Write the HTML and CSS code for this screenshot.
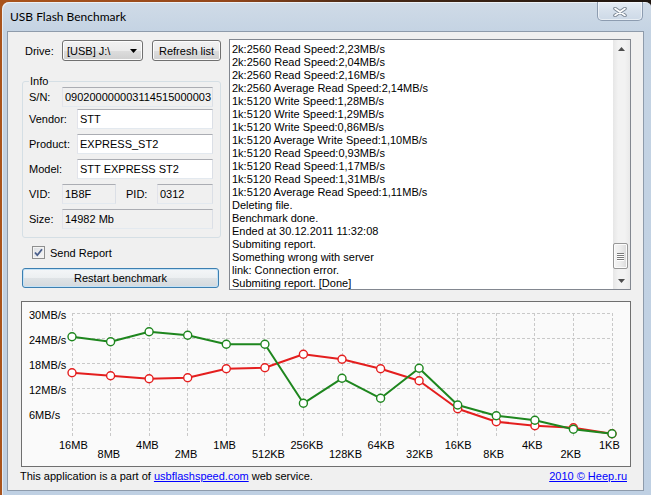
FILE: index.html
```html
<!DOCTYPE html>
<html>
<head>
<meta charset="utf-8">
<title>USB Flash Benchmark</title>
<link rel="stylesheet" href="styles.css">
</head>
<body>
<div class="window">
  <div class="titlebar">
    <span class="title">USB Flash Benchmark</span>
    <div class="close-btn">
      <svg class="close-x" width="14" height="10" viewBox="0 0 14 10">
        <path class="x-outline" d="M2 1.5 L12 8.5 M12 1.5 L2 8.5"/>
        <path class="x-fill" d="M2 1.5 L12 8.5 M12 1.5 L2 8.5"/>
      </svg>
    </div>
  </div>
  <div class="client">
    <div class="top">
      <div class="left">
        <div class="drive-row">
          <span class="drive-label">Drive:</span>
          <div class="combo"><span class="combo-text">[USB] J:\</span><svg class="combo-arrow" width="7" height="4" viewBox="0 0 7 4"><path d="M0 0H7L3.5 4Z"/></svg></div>
          <div class="btn refresh">Refresh list</div>
        </div>
        <fieldset class="info">
          <legend>Info</legend>
          <div class="row first"><span class="lbl short">S/N:</span><div class="field ro">090200000003114515000003</div></div>
          <div class="row tight"><span class="lbl long">Vendor:</span><div class="field">STT</div></div>
          <div class="row"><span class="lbl long">Product:</span><div class="field">EXPRESS_ST2</div></div>
          <div class="row"><span class="lbl long">Model:</span><div class="field">STT EXPRESS ST2</div></div>
          <div class="row"><span class="lbl short">VID:</span><div class="field ro vid">1B8F</div><span class="lbl pid">PID:</span><div class="field ro">0312</div></div>
          <div class="row"><span class="lbl short">Size:</span><div class="field ro">14982 Mb</div></div>
        </fieldset>
        <div class="check-row">
          <span class="checkbox"><svg width="13" height="13" viewBox="0 0 13 13"><path class="check" d="M3 6.5 L5.3 9.2 L10 3.2"/></svg></span>
          <span class="check-label">Send Report</span>
        </div>
        <div class="btn default restart">Restart benchmark</div>
      </div>
      <div class="log">
        <div class="log-text">
          <div>2k:2560 Read Speed:2,23MB/s</div>
          <div>2k:2560 Read Speed:2,04MB/s</div>
          <div>2k:2560 Read Speed:2,16MB/s</div>
          <div>2k:2560 Average Read Speed:2,14MB/s</div>
          <div>1k:5120 Write Speed:1,28MB/s</div>
          <div>1k:5120 Write Speed:1,29MB/s</div>
          <div>1k:5120 Write Speed:0,86MB/s</div>
          <div>1k:5120 Average Write Speed:1,10MB/s</div>
          <div>1k:5120 Read Speed:0,93MB/s</div>
          <div>1k:5120 Read Speed:1,17MB/s</div>
          <div>1k:5120 Read Speed:1,31MB/s</div>
          <div>1k:5120 Average Read Speed:1,11MB/s</div>
          <div>Deleting file.</div>
          <div>Benchmark done.</div>
          <div>Ended at 30.12.2011 11:32:08</div>
          <div>Submiting report.</div>
          <div>Something wrong with server</div>
          <div>link: Connection error.</div>
          <div>Submiting report. [Done]</div>
        </div>
        <div class="vscroll">
          <div class="sb-btn"><svg width="7" height="4" viewBox="0 0 7 4"><path d="M0 4H7L3.5 0Z"/></svg></div>
          <div class="sb-track">
            <div class="sb-thumb"><span></span><span></span><span></span><span></span></div>
          </div>
          <div class="sb-btn"><svg width="7" height="4" viewBox="0 0 7 4"><path d="M0 0H7L3.5 4Z"/></svg></div>
        </div>
      </div>
    </div>
    <div class="chart">
      <svg width="608" height="164" viewBox="0 0 608 164">
        <g class="grid">
          <path d="M50.5 11V136 M88.5 11V136 M127.5 11V136 M165.5 11V136 M204.5 11V136 M242.5 11V136 M281.5 11V136 M320.5 11V136 M358.5 11V136 M397.5 11V136 M435.5 11V136 M474.5 11V136 M512.5 11V136 M551.5 11V136 M590.5 11V136"/>
          <path d="M50 11.5H591 M50 36.5H591 M50 61.5H591 M50 86.5H591 M50 111.5H591"/>
        </g>
        <g class="ylab">
          <text x="7" y="17">30MB/s</text>
          <text x="7" y="42">24MB/s</text>
          <text x="7" y="67">18MB/s</text>
          <text x="7" y="92">12MB/s</text>
          <text x="7" y="117">6MB/s</text>
        </g>
        <g class="xlab">
          <text x="37" y="147">16MB</text>
          <text x="75.6" y="156">8MB</text>
          <text x="114.1" y="147">4MB</text>
          <text x="152.7" y="156">2MB</text>
          <text x="191.3" y="147">1MB</text>
          <text x="229.9" y="156">512KB</text>
          <text x="268.4" y="147">256KB</text>
          <text x="307" y="156">128KB</text>
          <text x="345.6" y="147">64KB</text>
          <text x="384.1" y="156">32KB</text>
          <text x="422.7" y="147">16KB</text>
          <text x="461.3" y="156">8KB</text>
          <text x="499.9" y="147">4KB</text>
          <text x="538.4" y="156">2KB</text>
          <text x="577" y="147">1KB</text>
        </g>
        <g class="series red">
          <polyline points="50,70.7 88.6,73.7 127.1,76.7 165.7,75.7 204.3,66.7 242.9,65.7 281.4,52.3 320,57.3 358.6,66.7 397.1,78.7 435.7,106.7 474.3,119.7 512.9,123.7 551.4,125.7 590,131.7"/>
          <circle cx="50" cy="70.7" r="4"/><circle cx="88.6" cy="73.7" r="4"/><circle cx="127.1" cy="76.7" r="4"/><circle cx="165.7" cy="75.7" r="4"/><circle cx="204.3" cy="66.7" r="4"/><circle cx="242.9" cy="65.7" r="4"/><circle cx="281.4" cy="52.3" r="4"/><circle cx="320" cy="57.3" r="4"/><circle cx="358.6" cy="66.7" r="4"/><circle cx="397.1" cy="78.7" r="4"/><circle cx="435.7" cy="106.7" r="4"/><circle cx="474.3" cy="119.7" r="4"/><circle cx="512.9" cy="123.7" r="4"/><circle cx="551.4" cy="125.7" r="4"/><circle cx="590" cy="131.7" r="4"/>
        </g>
        <g class="series green">
          <polyline points="50,34.7 88.6,39.7 127.1,29.7 165.7,33.3 204.3,42.3 242.9,42.3 281.4,101.3 320,76.3 358.6,96.3 397.1,66.3 435.7,103 474.3,113.7 512.9,118.3 551.4,127.3 590,131.7"/>
          <circle cx="50" cy="34.7" r="4"/><circle cx="88.6" cy="39.7" r="4"/><circle cx="127.1" cy="29.7" r="4"/><circle cx="165.7" cy="33.3" r="4"/><circle cx="204.3" cy="42.3" r="4"/><circle cx="242.9" cy="42.3" r="4"/><circle cx="281.4" cy="101.3" r="4"/><circle cx="320" cy="76.3" r="4"/><circle cx="358.6" cy="96.3" r="4"/><circle cx="397.1" cy="66.3" r="4"/><circle cx="435.7" cy="103" r="4"/><circle cx="474.3" cy="113.7" r="4"/><circle cx="512.9" cy="118.3" r="4"/><circle cx="551.4" cy="127.3" r="4"/><circle cx="590" cy="131.7" r="4"/>
        </g>
      </svg>
    </div>
    <div class="footer">
      <span>This application is a part of <a class="link" href="#">usbflashspeed.com</a> web service.</span>
      <a class="link" href="#">2010 © Heep.ru</a>
    </div>
  </div>
</div>
</body>
</html>
```

FILE: styles.css
```css
* { box-sizing: border-box; }
html, body {
  margin: 0;
  padding: 0;
  width: 651px;
  height: 495px;
  overflow: hidden;
}
body {
  background: linear-gradient(90deg, #a9541d 0%, #93461a 35%, #4a2a16 55%, #1d1510 100%);
  font-family: "Liberation Sans", Arial, sans-serif;
  font-size: 11px;
  color: #000;
}
.window {
  margin: 2px 0 0 2px;
  width: 650px;
  height: 500px;
  padding: 0 8px 0 5px;
  border-radius: 7px 7px 0 0;
  background: linear-gradient(180deg, #d0dbe7 0px, #c4d3e3 30px, #bfd0e3 100%);
  box-shadow: inset 1px 1px 0 rgba(255,255,255,0.6);
}
.titlebar {
  height: 29px;
  display: flex;
  align-items: center;
}
.title {
  font-family: "Lato", "Liberation Sans", sans-serif;
  font-size: 12px;
  margin-left: 3px;
  color: #000;
}
.close-btn {
  margin-left: auto;
  margin-right: 1px;
  align-self: flex-start;
  width: 46px;
  height: 19px;
  border: 1px solid #8d9cb0;
  border-top: none;
  border-radius: 0 0 5px 5px;
  background: linear-gradient(180deg, #e6edf5 0%, #d7e1ec 50%, #cdd9e7 100%);
  box-shadow: inset 0 0 0 1px rgba(255,255,255,0.55);
  display: flex;
  align-items: center;
  justify-content: center;
}
.close-x { margin-top: 2px; }
.x-outline { stroke: #7d8896; stroke-width: 3.6; stroke-linecap: round; fill: none; }
.x-fill { stroke: #ffffff; stroke-width: 1.6; stroke-linecap: round; fill: none; }

.client {
  height: 460px;
  border: 1px solid #8e9bab;
  background: #f0f0f0;
  padding: 7px 12px 0 13px;
}
.top {
  display: flex;
  gap: 8px;
  height: 251px;
}
.left {
  width: 199px;
  margin-left: 1px;
  display: flex;
  flex-direction: column;
}
.drive-row {
  display: flex;
  align-items: center;
  height: 21px;
  margin-top: 1px;
}
.drive-label {
  width: 37px;
  margin-left: 3px;
}
.combo {
  width: 81px;
  height: 21px;
  border: 1px solid #707070;
  border-radius: 3px;
  background: linear-gradient(180deg, #f2f2f2 0%, #ebebeb 50%, #dddddd 51%, #cfcfcf 100%);
  box-shadow: inset 0 0 0 1px #fcfcfc;
  display: flex;
  align-items: center;
  padding: 0 5px 0 4px;
}
.combo-text { flex: 1; }
.combo-arrow path { fill: #000; }
.btn {
  height: 21px;
  border: 1px solid #707070;
  border-radius: 3px;
  background: linear-gradient(180deg, #f2f2f2 0%, #ebebeb 50%, #dddddd 51%, #cfcfcf 100%);
  box-shadow: inset 0 0 0 1px #fcfcfc;
  display: flex;
  align-items: center;
  justify-content: center;
}
.refresh {
  width: 69px;
  margin-left: 9px;
}
.info {
  margin: 15px 0 0 0;
  padding: 0 7px 8px 6px;
  border: 1px solid #d5dfe5;
  border-radius: 3px;
  min-width: 0;
}
.info legend {
  padding: 0 1px;
  line-height: 11px;
  font-size: 11px;
}
.row {
  display: flex;
  align-items: center;
  height: 20px;
  margin-top: 5px;
}
.row.first { margin-top: 0; }
.row.tight { margin-top: 2px; }
.lbl.short { width: 33px; }
.lbl.long { width: 48px; }
.lbl.pid { width: 31px; margin-left: 10px; }
.field {
  flex: 1;
  height: 20px;
  border: 1px solid;
  border-color: #abadb3 #dbdfe6 #e3e9ef #e2e3ea;
  background: #fff;
  padding: 0 1px 0 2px;
  line-height: 18px;
  white-space: nowrap;
  overflow: hidden;
  min-width: 0;
}
.field.ro { background: #f0f0f0; }
.field.vid { flex: 0 0 54px; }

.check-row {
  display: flex;
  align-items: center;
  height: 13px;
  margin-top: 8px;
}
.checkbox {
  width: 13px;
  height: 13px;
  margin-left: 10px;
  border: 1px solid #8e8f8f;
  background: linear-gradient(135deg, #dcdfe3 0%, #f7f7f7 100%);
  box-shadow: inset 0 0 0 1px #f4f4f4;
  display: flex;
}
.checkbox svg { margin: -1px; }
.check { fill: none; stroke: #4a5f8c; stroke-width: 1.8; }
.check-label { margin-left: 5px; }
.restart {
  width: 197px;
  height: 20px;
  margin-top: 9px;
}
.btn.default {
  border-color: #3c7fb1;
  box-shadow: inset 0 0 0 1px #c4e2f6;
  background: linear-gradient(180deg, #f4f6f8 0%, #eceff1 50%, #dfe3e6 51%, #d4d9dd 100%);
}

.log {
  width: 402px;
  height: 251px;
  border: 1px solid #828790;
  background: #fff;
  display: flex;
}
.log-text {
  flex: 1;
  padding: 3px 0 0 2px;
  line-height: 13px;
  white-space: nowrap;
  overflow: hidden;
}
.vscroll {
  width: 17px;
  display: flex;
  flex-direction: column;
  background: linear-gradient(90deg, #e6e6e6 0%, #f2f2f2 30%, #f2f2f2 70%, #e9e9e9 100%);
}
.sb-btn {
  height: 17px;
  display: flex;
  align-items: center;
  justify-content: center;
}
.sb-btn path { fill: #4d4d4d; }
.sb-track {
  flex: 1;
  display: flex;
  flex-direction: column;
}
.sb-thumb {
  margin: auto 1px 3px 0;
  width: 15px;
  height: 26px;
  border: 1px solid #979797;
  border-radius: 2px;
  background: linear-gradient(90deg, #f5f5f5 0%, #ececec 50%, #dadada 100%);
  box-shadow: inset 0 0 0 1px #fbfbfb;
  display: flex;
  flex-direction: column;
  align-items: center;
  justify-content: center;
  gap: 1px;
}
.sb-thumb span {
  width: 7px;
  height: 1px;
  background: #7a7a7a;
  box-shadow: 0 1px 0 #ffffff;
}

.chart {
  margin-top: 11px;
  width: 610px;
  height: 166px;
  border: 1px solid #6f6f6f;
  background: #fafafa;
}
.chart svg { display: block; }
.grid path { stroke: #c9c9c9; stroke-width: 1; stroke-dasharray: 3 2; fill: none; }
.ylab text, .xlab text {
  font-family: "Liberation Sans", Arial, sans-serif;
  font-size: 11px;
  fill: #000;
}
.series polyline { fill: none; stroke-width: 2; stroke-linejoin: round; }
.series circle { fill: #fff; stroke-width: 1.4; }
.red polyline, .red circle { stroke: #e41e1e; }
.green polyline, .green circle { stroke: #1e861e; }

.footer {
  display: flex;
  justify-content: space-between;
  margin: 3px 4px 0 -1px;
  line-height: 13px;
}
.link {
  color: #0000ff;
  text-decoration: underline;
}
```
